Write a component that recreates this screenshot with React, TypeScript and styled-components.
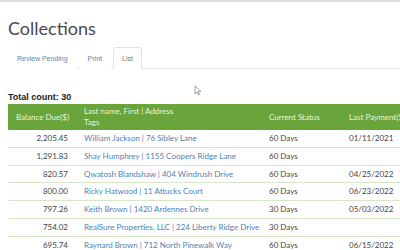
import React from "react";
import styled, { createGlobalStyle } from "styled-components";

const Global = createGlobalStyle`
  html, body {
    margin: 0;
    padding: 0;
    background: #fff;
    overflow: hidden;
  }
  body {
    font-family: "Lato", "Open Sans", sans-serif;
  }
`;

const Page = styled.div`
  position: relative;
  width: 400px;
  height: 250px;
  border-top: 2px solid #dcdcdc;
  box-sizing: border-box;
  padding: 0 0 0 8px;
  overflow: hidden;
`;

const Title = styled.h1`
  margin: 14px 0 0 0;
  font-family: "Lato", sans-serif;
  font-weight: 400;
  font-size: 18px;
  line-height: 24px;
  color: #4a4a4a;
`;

const Tabs = styled.div`
  display: flex;
  margin-top: 7px;
  height: 21px;
  border-bottom: 1px solid #e3e3e3;
`;

const Tab = styled.div<{ active?: boolean }>`
  display: flex;
  align-items: center;
  padding: 0 8px;
  margin-right: 2px;
  font-family: "Liberation Sans", sans-serif;
  font-size: 7px;
  color: ${(p) => (p.active ? "#777" : "#5b86b5")};
  background: #fff;
  border: 1px solid ${(p) => (p.active ? "#e3e3e3" : "transparent")};
  border-bottom-color: ${(p) => (p.active ? "#fff" : "transparent")};
  border-radius: 3px 3px 0 0;
  margin-bottom: -1px;
`;

const Count = styled.div`
  margin-top: 23px;
  font-family: "Liberation Sans", sans-serif;
  font-weight: 700;
  font-size: 9px;
  color: #222;
`;

const Table = styled.table`
  margin-top: 2px;
  border-collapse: collapse;
  width: 420px;
  table-layout: fixed;
  font-size: 8px;
`;

const Head = styled.th<{ right?: boolean }>`
  background: #6aa53c;
  color: #e9f4de;
  font-weight: 400;
  text-align: ${(p) => (p.right ? "right" : "left")};
  padding: 2px 8px;
  height: 19px;
  line-height: 11px;
  white-space: nowrap;
  vertical-align: middle;
`;

const Cell = styled.td<{ right?: boolean; link?: boolean }>`
  text-align: ${(p) => (p.right ? "right" : "left")};
  padding: 0 8px;
  height: 16.8px;
  line-height: 16.8px;
  white-space: nowrap;
  overflow: hidden;
  color: ${(p) => (p.link ? "#4f7fb0" : "#444")};
  border-bottom: 1.5px solid #d8e6c8;
`;

const Cursor = styled.svg`
  position: absolute;
  left: 194px;
  top: 83px;
`;

const rows = [
  ["2,205.45", "William Jackson | 76 Sibley Lane", "60 Days", "01/11/2021"],
  ["1,291.83", "Shay Humphrey | 1155 Coopers Ridge Lane", "60 Days", ""],
  ["820.57", "Qwatosh Blandshaw | 404 Windrush Drive", "60 Days", "04/25/2022"],
  ["800.00", "Ricky Hatwood | 11 Attucks Court", "60 Days", "06/23/2022"],
  ["797.26", "Keith Brown | 1420 Ardennes Drive", "30 Days", "05/03/2022"],
  ["754.02", "RealSure Properties, LLC | 224 Liberty Ridge Drive", "30 Days", ""],
  ["695.74", "Raynard Brown | 712 North Pinewalk Way", "60 Days", "06/15/2022"],
];

export default function App() {
  return (
    <>
      <Global />
      <Page>
        <Title>Collections</Title>
        <Tabs>
          <Tab>Review Pending</Tab>
          <Tab>Print</Tab>
          <Tab active>List</Tab>
        </Tabs>
        <Count>Total count: 30</Count>
        <Table>
          <colgroup>
            <col style={{ width: 68 }} />
            <col style={{ width: 185 }} />
            <col style={{ width: 80 }} />
            <col style={{ width: 87 }} />
          </colgroup>
          <thead>
            <tr>
              <Head right>Balance Due($)</Head>
              <Head>
                Last name, First | Address
                <br />
                Tags
              </Head>
              <Head>Current Status</Head>
              <Head>Last Payment($)</Head>
            </tr>
          </thead>
          <tbody>
            {rows.map((r) => (
              <tr key={r[1]}>
                <Cell right>{r[0]}</Cell>
                <Cell link>{r[1]}</Cell>
                <Cell>{r[2]}</Cell>
                <Cell>{r[3]}</Cell>
              </tr>
            ))}
          </tbody>
        </Table>
        <Cursor width="8" height="11" viewBox="0 0 8 11">
          <path d="M1 1 L1 9 L3 7 L4.5 10 L5.5 9.5 L4.2 6.6 L7 6.6 Z" fill="#fff" stroke="#888" strokeWidth="0.8" />
        </Cursor>
      </Page>
    </>
  );
}
